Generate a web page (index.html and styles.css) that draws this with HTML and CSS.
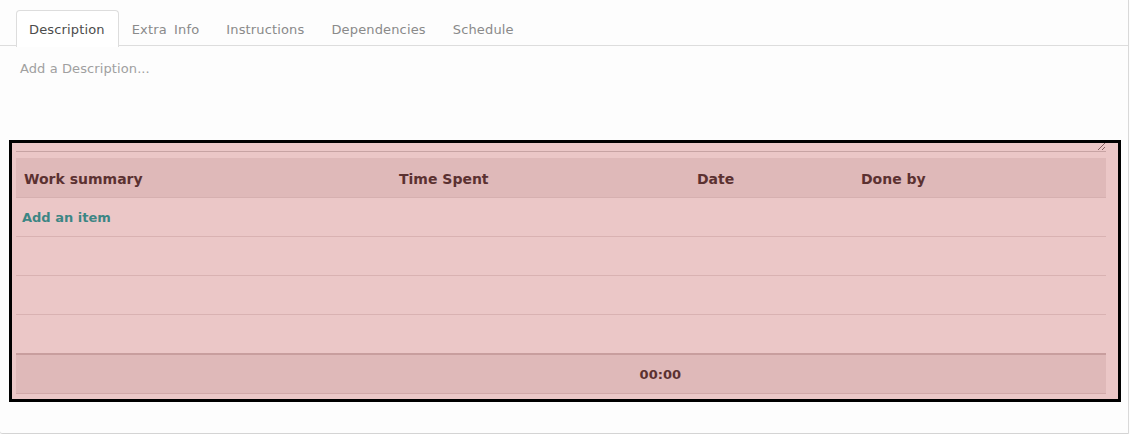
FILE: index.html
```html
<!DOCTYPE html>
<html>
<head>
<meta charset="utf-8">
<link rel="stylesheet" href="styles.css">
</head>
<body>
<div class="card">
  <ul class="tabs">
    <li class="tab active">Description</li>
    <li class="tab">Extra Info</li>
    <li class="tab">Instructions</li>
    <li class="tab">Dependencies</li>
    <li class="tab">Schedule</li>
  </ul>
  <div class="pane">
    <textarea class="desc" placeholder="Add a Description..."></textarea>
    <table class="grid">
      <colgroup>
        <col class="c1"><col class="c2"><col class="c3"><col class="c4">
      </colgroup>
      <thead>
        <tr><th>Work summary</th><th>Time Spent</th><th>Date</th><th>Done by</th></tr>
      </thead>
      <tbody>
        <tr><td colspan="4" class="add"><a href="#">Add an item</a></td></tr>
        <tr><td></td><td></td><td></td><td></td></tr>
        <tr><td></td><td></td><td></td><td></td></tr>
        <tr><td></td><td></td><td></td><td></td></tr>
      </tbody>
      <tfoot>
        <tr><td></td><td class="total">00:00</td><td></td><td></td></tr>
      </tfoot>
    </table>
    <div class="highlight"></div>
  </div>
</div>
</body>
</html>
```
FILE: styles.css
```css
html, body {
  margin: 0;
  padding: 0;
  background: #ffffff;
}
body {
  font-family: "DejaVu Sans", Verdana, sans-serif;
  font-size: 13px;
  color: #4c4c4c;
}
.card {
  position: relative;
  width: 1129px;
  height: 434px;
  box-sizing: border-box;
  background: #fdfdfd;
  border-right: 1px solid #d9d9d9;
  border-bottom: 1px solid #d4d4d4;
  border-bottom-left-radius: 3px;
  box-shadow: 0 1px 1px rgba(0, 0, 0, 0.08);
}
.tabs {
  list-style: none;
  margin: 0;
  padding: 10px 0 0 16px;
  display: flex;
  border-bottom: 1px solid #dddddd;
  height: 35px;
  box-sizing: content-box;
}
.tab {
  height: 35px;
  line-height: 37px;
  padding: 0 13px 0 12px;
  border: 1px solid transparent;
  border-bottom: none;
  color: #8a8a8a;
  letter-spacing: 0.15px;
  word-spacing: 3px;
}
.tab.active {
  background: #ffffff;
  border-color: #dddddd;
  border-radius: 4px 4px 0 0;
  color: #4c4c4c;
  height: 36px;
  margin-bottom: -1px;
}
.pane {
  position: relative;
  padding: 0 0 0 16px;
}
.desc {
  display: block;
  width: 1090px;
  height: 106px;
  box-sizing: border-box;
  margin: 0;
  padding: 15px 4px 14px;
  border: none;
  border-bottom: 1px solid #c9c9c9;
  background: transparent;
  font-family: "DejaVu Sans", Verdana, sans-serif;
  font-size: 13px;
  letter-spacing: 0.1px;
  color: #4c4c4c;
  resize: vertical;
  outline: none;
}
.desc::placeholder {
  color: #a0a0a0;
}
.grid {
  margin-top: 6px;
  width: 1090px;
  border-collapse: collapse;
  table-layout: fixed;
}
.c1 { width: 375px; }
.c2 { width: 298px; }
.c3 { width: 164px; }
.c4 { width: 253px; }
.grid th {
  height: 37px;
  padding: 2px 8px 0;
  text-align: left;
  font-weight: bold;
  font-size: 14px;
  color: #2e2626;
  background: #ebe8e8;
  border-bottom: 1px solid #dfdcdc;
}
.grid td {
  height: 38px;
  padding: 0 8px;
  border-bottom: 1px solid #e2dfdf;
}
.grid td.add {
  padding-left: 6px;
}
.add a {
  color: #00a09d;
  font-weight: bold;
  font-size: 13px;
  text-decoration: none;
}
.grid tfoot td {
  height: 38px;
  background: #ebe8e8;
  border-top: 2px solid #cac2c2;
  border-bottom: 1px solid #d8d2d2;
  font-weight: bold;
  color: #2e2626;
}
.grid tfoot td.total {
  text-align: right;
  padding-right: 8px;
}
.highlight {
  position: absolute;
  left: 9px;
  top: 94px;
  width: 1112px;
  height: 262px;
  box-sizing: border-box;
  border: 3px solid #000000;
  background: rgba(195, 75, 75, 0.3);
  pointer-events: none;
}
```
